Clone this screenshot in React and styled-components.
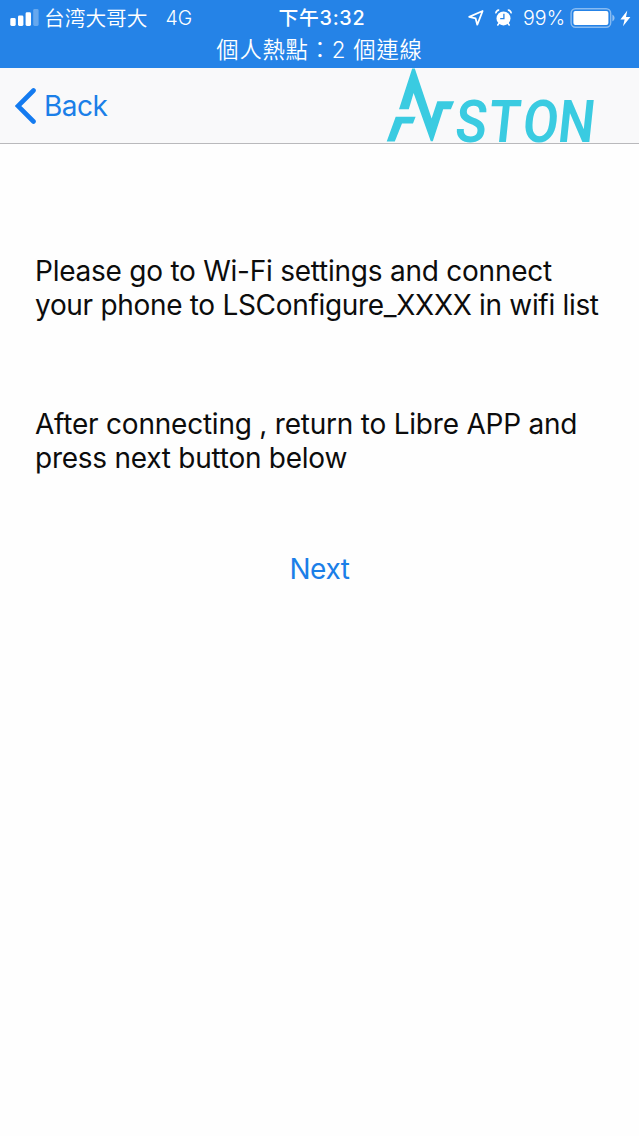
import styled, { createGlobalStyle } from 'styled-components';
import React from 'react';


export default function App() {
    return (
        <>
            <GlobalStyle />
            <Screen>
                <StatusBar />
                <NavBar />
                <Content>
                    <Message>
                        <Line $spacing="-0.24px">Please go to Wi-Fi settings and connect</Line>
                        <Line $spacing="-0.31px">your phone to LSConfigure_XXXX in wifi list</Line>
                    </Message>
                    <Message>
                        <Line $spacing="-0.22px">After connecting , return to Libre APP and</Line>
                        <Line $spacing="-0.25px">press next button below</Line>
                    </Message>
                    <NextButton>Next</NextButton>
                </Content>
            </Screen>
        </>
    )
}

function StatusBar() {
    return (
        <Status>
            <StatusRow>
                <Carrier>
                    <Signal />
                    <CarrierName>台湾大哥大</CarrierName>
                    <Network>4G</Network>
                </Carrier>
                <Clock>下午3:32</Clock>
                <StatusIcons>
                    <LocationIcon />
                    <AlarmIcon />
                    <Percent>99%</Percent>
                    <BatteryIcon />
                    <BoltIcon />
                </StatusIcons>
            </StatusRow>
            <Hotspot>個人熱點：2 個連線</Hotspot>
        </Status>
    )
}

function NavBar() {
    return (
        <Nav>
            <BackButton>
                <svg width="21" height="37" viewBox="0 0 21 37">
                    <path d="M18.5 2.5 L3 18 L18.5 33.5" fill="none" stroke="#147bf0" strokeWidth="4.6" strokeLinecap="round" strokeLinejoin="miter" />
                </svg>
                <span>Back</span>
            </BackButton>
            <Logo />
        </Nav>
    )
}

const Signal = () => (
    <svg width="29" height="18" viewBox="0 0 29 18" fill="#fff">
        <rect x="0.3" y="9" width="5.4" height="8" rx="1.4" />
        <rect x="8" y="6.5" width="5.4" height="10.5" rx="1.4" />
        <rect x="15.6" y="3.3" width="5.4" height="13.7" rx="1.4" />
        <rect x="23.2" y="0" width="5.4" height="17" rx="1.4" opacity="0.3" />
    </svg>
)

const LocationIcon = () => (
    <svg width="16" height="16" viewBox="0 0 16 16">
        <path d="M14.6 1 L1.2 6.9 L7.6 8.4 L9.3 14.7 Z" fill="none" stroke="#fff" strokeWidth="1.8" strokeLinejoin="round" />
    </svg>
)

const AlarmIcon = () => (
    <svg width="17" height="18" viewBox="0 0 17 18">
        <circle cx="8.5" cy="9.4" r="7" fill="#fff" />
        <path d="M0.9 4.4 A3 3 0 0 1 4.2 1.2 M16.1 4.4 A3 3 0 0 0 12.8 1.2" fill="none" stroke="#fff" strokeWidth="1.7" />
        <path d="M3.7 14.7 L2.8 16 M13.3 14.7 L14.2 16" stroke="#fff" strokeWidth="1.6" strokeLinecap="round" />
        <path d="M8.9 4.8 V9.7 H5.2" fill="none" stroke="#2583e7" strokeWidth="1.3" />
    </svg>
)

const BatteryIcon = () => (
    <svg width="46" height="20" viewBox="0 0 46 20">
        <rect x="1.1" y="0.8" width="39.6" height="18.4" rx="4.5" fill="none" stroke="#fff" strokeOpacity="0.45" strokeWidth="1.4" />
        <rect x="3.4" y="3" width="35" height="14" rx="2" fill="#fff" />
        <path d="M42.4 6.5 Q44.6 7.5 44.6 10 Q44.6 12.5 42.4 13.5 Z" fill="#fff" opacity="0.5" />
    </svg>
)

const BoltIcon = () => (
    <BoltSvg width="11" height="17" viewBox="0 0 11 17">
        <path d="M7.3 0.5 L0.4 9.4 H4.6 L3 16.3 L10.4 6.9 H6 Z" fill="#fff" />
    </BoltSvg>
)

const Logo = () => (
    <LogoSvg width="214" height="78" viewBox="0 0 214 78" fill="#3acbe1">
        <path d="M27.2 0.5 L14 41.2 H23.8 L28.6 25 L45.8 73.2 H47.8 L58.2 41.2 H65.9 L69.2 33.2 H52.3 L46.6 50.5 L29.8 0.5 Z" />
        <path d="M10.7 48.8 H30.6 L28 55.5 H17 L9.8 73.4 H1.7 Z" />
        <text transform="translate(68.8 74.4) skewX(-6) scale(0.87 1)" x="0 38 77.5 118" y="0" fontFamily="Roboto, sans-serif" fontSize="59" fontWeight="600">STON</text>
    </LogoSvg>
)

const GlobalStyle = createGlobalStyle`
    * {
        box-sizing: border-box;
    }

    body {
        margin: 0;
        background-color: #fefefe;
        font-family: Inter, "Noto Sans CJK TC", sans-serif;
    }
`

const Screen = styled.div`
    width: 100%;
    min-height: 1136px;
    background-color: #fefefe;
`

const Status = styled.header`
    height: 68px;
    background-color: #2583e7;
    color: #fff;
`

const StatusRow = styled.div`
    height: 36px;
    padding: 0 8px 0 10px;
    display: grid;
    grid-template-columns: 1fr auto 1fr;
    align-items: center;
`

const Carrier = styled.div`
    display: flex;
    align-items: center;
`

const CarrierName = styled.span`
    margin-left: 5px;
    font-family: "Noto Sans CJK SC", sans-serif;
    font-size: 20.7px;
    font-weight: 350;
    line-height: 34px;
    margin-bottom: 2px;
`

const Network = styled.span`
    margin-left: 18px;
    font-size: 19.4px;
    font-weight: 350;
`

const Clock = styled.span`
    font-size: 19.8px;
    font-weight: 500;
    line-height: 36px;
    letter-spacing: 0.7px;
    margin-left: 3px;
`

const StatusIcons = styled.div`
    display: flex;
    justify-content: flex-end;
    align-items: center;
    gap: 11px;
`

const Percent = styled.span`
    margin-right: -6px;
    font-size: 19.6px;
    font-weight: 350;
`

const BoltSvg = styled.svg`
    margin-left: -7px;
`

const Hotspot = styled.p`
    margin: 0;
    line-height: 28px;
    font-size: 22.3px;
    font-weight: 350;
    letter-spacing: 0.8px;
    text-align: center;
`

const Nav = styled.nav`
    height: 76px;
    padding-left: 15px;
    padding-right: 40px;
    display: flex;
    justify-content: space-between;
    align-items: flex-start;
    background-color: #f9f9fa;
    border-bottom: 1px solid #b9b9bc;
`

const BackButton = styled.button`
    height: 76px;
    padding: 0;
    display: flex;
    align-items: center;
    gap: 8px;
    background: none;
    border: none;
    color: #1b7fe8;
    font-family: inherit;
    font-size: 28px;
    letter-spacing: -0.5px;
    cursor: pointer;
`

const LogoSvg = styled.svg`
    flex-shrink: 0;
    overflow: visible;
`

const Content = styled.main`
    padding: 110px 35px 0;
    display: flex;
    flex-direction: column;
`

const Message = styled.p`
    margin: 0 0 85px;
    color: #0c0c0c;
    font-size: 28px;
    line-height: 34px;

    &:last-of-type {
        margin-bottom: 77px;
    }
`

const Line = styled.span`
    display: block;
    white-space: nowrap;
    letter-spacing: ${props => props.$spacing};
`

const NextButton = styled.button`
    align-self: center;
    padding: 0;
    background: none;
    border: none;
    color: #1b7fe8;
    font-family: inherit;
    font-size: 28px;
    letter-spacing: -0.4px;
    line-height: 34px;
    cursor: pointer;
`
